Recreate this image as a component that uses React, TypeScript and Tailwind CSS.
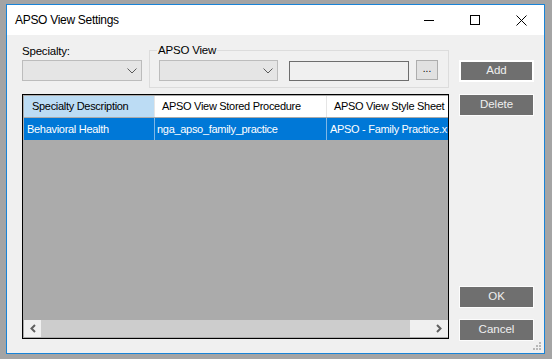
import React from "react";

const font = { fontFamily: '"Liberation Sans", Arial, sans-serif' };

function Chevron() {
  return (
    <svg width="10" height="6" viewBox="0 0 10 6" className="shrink-0">
      <path d="M0.5 0.5 L5 5 L9.5 0.5" fill="none" stroke="#5a5a5a" strokeWidth="1" />
    </svg>
  );
}

function Combo({ w }: { w: string }) {
  return (
    <div className={`${w} h-[21px] border border-[#bcbcbc] bg-[#e5e5e5] flex items-center justify-end pr-[4px]`}>
      <Chevron />
    </div>
  );
}

function DarkButton({ label, thick }: { label: string; thick?: boolean }) {
  return (
    <div
      className={`w-[75px] h-[22px] bg-[#6f6f6f] flex items-center justify-center text-[11.5px] text-[#f0f0f0] ${
        thick ? "border-2 border-white" : "border border-[#fcfcfc]"
      }`}
    >
      {label}
    </div>
  );
}

export default function App() {
  return (
    <div className="w-[552px] h-[359px] bg-[#a4a4a4] pl-[6px] pt-[4px] overflow-hidden" style={font}>
      <div className="w-[539px] h-[350px] border border-[#1883d7] bg-[#f0f0f0] flex flex-col">
        {/* Title bar */}
        <div className="h-[30px] bg-white flex items-center shrink-0">
          <div className="pl-[8px] text-[12px] text-black flex-1 tracking-[-0.3px]">APSO View Settings</div>
          <div className="flex items-center h-full">
            <div className="w-[46px] h-full flex items-center justify-center">
              <div className="w-[10px] h-px bg-black" />
            </div>
            <div className="w-[46px] h-full flex items-center justify-center">
              <div className="w-[10px] h-[10px] border border-black" />
            </div>
            <div className="w-[46px] h-full flex items-center justify-center">
              <svg width="11" height="11" viewBox="0 0 11 11">
                <path d="M0.5 0.5 L10.5 10.5 M10.5 0.5 L0.5 10.5" stroke="#000" strokeWidth="1" />
              </svg>
            </div>
          </div>
        </div>
        {/* Body */}
        <div className="flex-1 flex pl-[15px] relative">
          {/* Left column */}
          <div className="w-[427px] flex flex-col">
            <div className="h-[59px] flex">
              <div className="w-[120px] flex flex-col pt-[10px]">
                <div className="text-[11.5px] leading-[13px] text-black h-[15px] tracking-[-0.2px]">Specialty:</div>
                <Combo w="w-[120px]" />
              </div>
              <div className="ml-[7px] w-[300px] pt-[15px]">
                <div className="relative h-[38px] border border-[#dcdcdc] pl-[9px] pt-[9px] flex items-start">
                  <div className="absolute left-[7px] top-[-7px] bg-[#f0f0f0] px-[1px] text-[11.5px] leading-[13px] text-black tracking-[-0.2px]">
                    APSO View
                  </div>
                  <Combo w="w-[119px]" />
                  <div className="ml-[11px] mt-[1px] w-[120px] h-[20px] border border-[#6e6e6e] bg-[#f0f0f0]" />
                  <div className="ml-[7px] w-[22px] h-[20px] border border-[#adadad] bg-[#e1e1e1] flex items-center justify-center text-[10px] leading-none text-black pb-[2px]">
                    ...
                  </div>
                </div>
              </div>
            </div>
            {/* Grid */}
            <div className="h-[245px] border border-black bg-[#ababab] flex flex-col overflow-hidden pl-px">
              <div className="h-[22px] flex text-[11px] tracking-[-0.3px] text-black shrink-0 pt-px">
                <div className="w-[131px] bg-[#bcdcf4] flex items-center pl-[8px] border-r border-[#e5e5e5] whitespace-nowrap">
                  Specialty Description
                </div>
                <div className="w-[172px] bg-white flex items-center pl-[7px] border-r border-[#e5e5e5] whitespace-nowrap">
                  APSO View Stored Procedure
                </div>
                <div className="flex-1 bg-white flex items-center pl-[7px] whitespace-nowrap overflow-hidden">
                  APSO View Style Sheet
                </div>
              </div>
              <div className="h-[22px] flex text-[11px] tracking-[-0.3px] text-white bg-[#0078d7] shrink-0 mt-px">
                <div className="w-[131px] flex items-center pl-[3px] border-r border-[#7fb7e6] whitespace-nowrap">
                  Behavioral Health
                </div>
                <div className="w-[172px] flex items-center pl-[2px] border-r border-[#7fb7e6] whitespace-nowrap">
                  nga_apso_family_practice
                </div>
                <div className="flex-1 flex items-center pl-[3px] whitespace-nowrap overflow-hidden">
                  APSO - Family Practice.x
                </div>
              </div>
              <div className="flex-1" />
              <div className="h-[17px] flex shrink-0 mb-px">
                <div className="w-[17px] bg-[#f0f0f0] flex items-center justify-center">
                  <svg width="6" height="9" viewBox="0 0 6 9">
                    <path d="M5 1 L1.5 4.5 L5 8" fill="none" stroke="#606060" strokeWidth="2" />
                  </svg>
                </div>
                <div className="w-[369px] bg-[#cdcdcd]" />
                <div className="flex-1 bg-[#f0f0f0] flex items-center justify-end pr-[6px]">
                  <svg width="6" height="9" viewBox="0 0 6 9">
                    <path d="M1 1 L4.5 4.5 L1 8" fill="none" stroke="#606060" strokeWidth="2" />
                  </svg>
                </div>
              </div>
            </div>
          </div>
          {/* Right column */}
          <div className="ml-[10px] flex flex-col pt-[25px] pb-[12px]">
            <DarkButton label="Add" thick />
            <div className="mt-[12px]">
              <DarkButton label="Delete" />
            </div>
            <div className="flex-1" />
            <DarkButton label="OK" />
            <div className="mt-[11px]">
              <DarkButton label="Cancel" />
            </div>
          </div>
          {/* Resize grip */}
          <div className="absolute right-[2px] bottom-[2px]">
            <svg width="10" height="10" viewBox="0 0 10 10">
              <rect x="7" y="1" width="2" height="2" fill="#b8b8b8" />
              <rect x="4" y="4" width="2" height="2" fill="#b8b8b8" />
              <rect x="7" y="4" width="2" height="2" fill="#b8b8b8" />
              <rect x="1" y="7" width="2" height="2" fill="#b8b8b8" />
              <rect x="4" y="7" width="2" height="2" fill="#b8b8b8" />
              <rect x="7" y="7" width="2" height="2" fill="#b8b8b8" />
            </svg>
          </div>
        </div>
      </div>
    </div>
  );
}
